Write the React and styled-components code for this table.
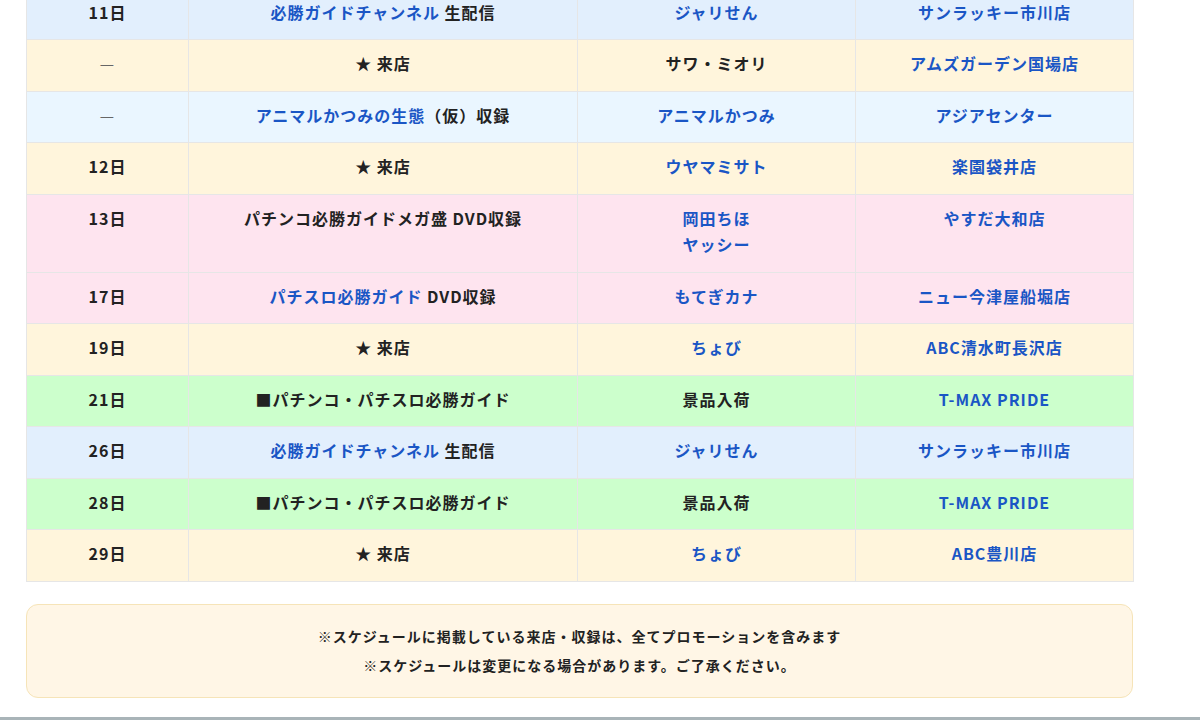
import React from 'react';
import styled, { createGlobalStyle } from 'styled-components';

const GlobalStyle = createGlobalStyle`
  html, body {
    margin: 0;
    padding: 0;
    background: #fff;
    overflow: hidden;
  }
  body {
    font-family: "Noto Sans CJK JP", "Noto Sans", sans-serif;
    color: #222;
  }
`;

const Page = styled.div`
  height: 720px;
  display: flex;
  flex-direction: column;
  overflow: hidden;
`;

const Content = styled.main`
  width: 1107px;
  margin: -12.5px 0 0 26px;
  display: flex;
  flex-direction: column;
  gap: 22px;
`;

const Table = styled.table`
  width: 100%;
  border-collapse: collapse;
  table-layout: fixed;
  font-size: 16px;
  font-weight: 700;
  letter-spacing: 1px;
`;

const rowColors = {
  live: '#e2effd',
  visit: '#fff5dc',
  record: '#eaf6ff',
  dvd: '#fee4ef',
  prize: '#ccffcc',
};

const Row = styled.tr`
  background: ${({ $kind }) => rowColors[$kind]};
`;

const Cell = styled.td`
  border: 1px solid #e6e6e6;
  padding: 10px 10px 14px;
  line-height: 26.5px;
  text-align: center;
  vertical-align: top;
  color: ${({ $muted }) => ($muted ? '#666' : '#222')};
  font-weight: ${({ $muted }) => ($muted ? 400 : 700)};
`;

const Link = styled.a`
  color: #1a56c5;
  text-decoration: none;
`;

const Note = styled.div`
  border: 1px solid #f6e4b8;
  border-radius: 12px;
  background: #fff6e6;
  padding: 17px 20px;
  text-align: center;
  font-size: 14px;
  font-weight: 700;
  letter-spacing: 1px;
  line-height: 29px;
  color: #222;
`;

const Footer = styled.footer`
  margin-top: 19px;
  height: 40px;
  flex-shrink: 0;
  background: #a9b4b8;
`;

const L = ({ children }) => <Link href="#">{children}</Link>;

const rows = [
  { kind: 'live', day: '11日', event: <><L>必勝ガイドチャンネル</L> 生配信</>, who: <L>ジャリせん</L>, shop: <L>サンラッキー市川店</L> },
  { kind: 'visit', day: null, event: '★ 来店', who: 'サワ・ミオリ', shop: <L>アムズガーデン国場店</L> },
  { kind: 'record', day: null, event: <><L>アニマルかつみの生態</L>（仮）収録</>, who: <L>アニマルかつみ</L>, shop: <L>アジアセンター</L> },
  { kind: 'visit', day: '12日', event: '★ 来店', who: <L>ウヤマミサト</L>, shop: <L>楽園袋井店</L> },
  { kind: 'dvd', day: '13日', event: 'パチンコ必勝ガイドメガ盛 DVD収録', who: <><L>岡田ちほ</L><br /><L>ヤッシー</L></>, shop: <L>やすだ大和店</L> },
  { kind: 'dvd', day: '17日', event: <><L>パチスロ必勝ガイド</L> DVD収録</>, who: <L>もてぎカナ</L>, shop: <L>ニュー今津屋船堀店</L> },
  { kind: 'visit', day: '19日', event: '★ 来店', who: <L>ちょび</L>, shop: <L>ABC清水町長沢店</L> },
  { kind: 'prize', day: '21日', event: '■パチンコ・パチスロ必勝ガイド', who: '景品入荷', shop: <L>T-MAX PRIDE</L> },
  { kind: 'live', day: '26日', event: <><L>必勝ガイドチャンネル</L> 生配信</>, who: <L>ジャリせん</L>, shop: <L>サンラッキー市川店</L> },
  { kind: 'prize', day: '28日', event: '■パチンコ・パチスロ必勝ガイド', who: '景品入荷', shop: <L>T-MAX PRIDE</L> },
  { kind: 'visit', day: '29日', event: '★ 来店', who: <L>ちょび</L>, shop: <L>ABC豊川店</L> },
];

const App = () => (
  <Page>
    <GlobalStyle />
    <Content>
      <Table>
        <colgroup>
          <col style={{ width: 162 }} />
          <col style={{ width: 389 }} />
          <col style={{ width: 278 }} />
          <col style={{ width: 278 }} />
        </colgroup>
        <tbody>
          {rows.map((r, i) => (
            <Row key={i} $kind={r.kind}>
              <Cell $muted={!r.day}>{r.day || '—'}</Cell>
              <Cell>{r.event}</Cell>
              <Cell>{r.who}</Cell>
              <Cell>{r.shop}</Cell>
            </Row>
          ))}
        </tbody>
      </Table>
      <Note>
        ※スケジュールに掲載している来店・収録は、全てプロモーションを含みます
        <br />
        ※スケジュールは変更になる場合があります。ご了承ください。
      </Note>
    </Content>
    <Footer />
  </Page>
);

export default App;
